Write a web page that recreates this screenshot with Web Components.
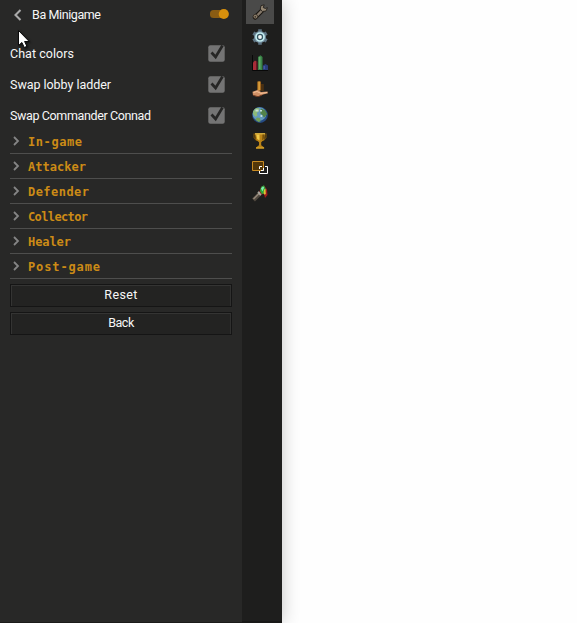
<!DOCTYPE html>
<html lang="en"><head><meta charset="utf-8"><title>Ba Minigame</title>
<style>html,body{margin:0;height:100%;overflow:hidden;background:#fefefe}</style></head><body>
<client-window></client-window>
<script>
const def=(name,html,setup)=>customElements.define(name,class extends HTMLElement{
  constructor(){super();this.attachShadow({mode:'open'});}
  connectedCallback(){this.shadowRoot.innerHTML=html;if(setup)setup(this,this.shadowRoot);}
});

// One line of text whose tracking is adjusted to fill the given width
def('fit-text',`<style>:host{display:block;white-space:nowrap;line-height:16px}span{display:inline-block}</style><span></span>`,(el,r)=>{
  const s=r.querySelector('span');s.textContent=el.getAttribute('text');
  const w=+el.getAttribute('width');
  const n=s.textContent.length;
  s.style.letterSpacing=((w-s.getBoundingClientRect().width)/(n-1))+'px';
});

def('panel-header',`<style>:host{display:flex;align-items:center;height:30px;padding:0 12px 0 13px}
fit-text{margin-left:9px;flex:1}svg{display:block}.t{margin-top:-2px}</style>
<svg width="10" height="14" viewBox="0 0 10 14"><path d="M7.5 2 2.5 7l5 5" fill="none" stroke="#a9a9a9" stroke-width="2.1"/></svg>
<fit-text text="Ba Minigame" width="69"></fit-text>
<svg class="t" width="20" height="12" viewBox="0 0 20 12"><rect x="0" y="2" width="16" height="8" rx="3.5" fill="#8a5c13"/><circle cx="13.8" cy="6" r="5.1" fill="#d8900c"/></svg>`);

def('check-row',`<style>:host{display:flex;align-items:center;justify-content:space-between;height:31px;padding:0 17px 0 10px}svg{display:block;margin-top:-1px}</style>
<fit-text></fit-text>
<svg width="17" height="17" viewBox="0 0 17 17"><rect x="0.3" y="0.3" width="16.4" height="16.4" rx="2" fill="#747474"/><path d="M3.5 7.5 7.6 12 14.5 .5" fill="none" stroke="#262625" stroke-width="2.7"/></svg>`,
(el,r)=>{const f=document.createElement('fit-text');f.setAttribute('text',el.getAttribute('label'));f.setAttribute('width',el.getAttribute('width'));r.querySelector('fit-text').replaceWith(f);});

def('section-row',`<style>:host{display:flex;align-items:center;height:24px;margin:0 10px;border-bottom:1px solid #4e4e4d;color:#cc8b16;font:bold 12px "DejaVu Sans Mono","Liberation Mono",monospace}
svg{margin:0 8px 0 2px;display:block}fit-text{margin-top:2px}</style>
<svg width="8" height="10" viewBox="0 0 8 10"><path d="M2 1l4 4-4 4" fill="none" stroke="#858585" stroke-width="1.8"/></svg><fit-text></fit-text>`,
(el,r)=>{const f=document.createElement('fit-text');f.style.marginTop='2px';f.setAttribute('text',el.getAttribute('label'));f.setAttribute('width',el.getAttribute('width'));r.querySelector('fit-text').replaceWith(f);});

def('panel-button',`<style>:host{display:flex;box-sizing:border-box;height:23px;margin:5px 10px 0;border:1px solid #151515;background:#232322;box-shadow:inset 1px 1px #343433,inset -1px 0 #30302f;justify-content:center;padding-top:2px}</style><fit-text></fit-text>`,
(el,r)=>{const f=document.createElement('fit-text');f.setAttribute('text',el.getAttribute('label'));f.setAttribute('width',el.getAttribute('width'));r.querySelector('fit-text').replaceWith(f);});

const icons={
wrench:`<path d="M3.2 13.4 10.5 6.2" stroke="#1a1712" stroke-width="4.6" stroke-linecap="round"/><path d="M3.6 13 10.8 5.8" stroke="#85786a" stroke-width="2.4"/><circle cx="3.4" cy="12.6" r="2.3" fill="#8b7d69" stroke="#221d17" stroke-width=".7"/><path d="M12.2 .8 9 1.7 8.3 5 10.2 7.4 14 7 15.4 3.7 13.4 4.5 11.2 3.6z" fill="#968975" stroke="#1c1814" stroke-width=".8"/><path d="M2.6 12.2h1.4v1.4H2.6z" fill="#29241e"/>`,
gear:`<g stroke="#5c7180" stroke-width="3.6"><path d="M8 .3v15.4M1.3 4.1l13.4 7.8M1.3 11.9 14.7 4.1"/></g><circle cx="8" cy="8" r="6" fill="#70899a"/><circle cx="8" cy="8" r="4" fill="#365462" stroke="#c4eef2" stroke-width="1.7"/><circle cx="8" cy="8" r="1.9" fill="#f0f6f5"/>`,
bars:`<path d="M.5 0v15.5H16" fill="none" stroke="#080808"/><path d="M1 7.5 3 5.5 5 7v8H1z" fill="#a82c38"/><path d="M4 7v8h1.5V6.5z" fill="#651a23"/><path d="M6 2 8.5.3 10.5 2v13H6z" fill="#398448"/><path d="M7 2h1.5v12H7z" fill="#65a568"/><path d="M11 10.5l2.4-1.6L16 10.6V15h-5z" fill="#293b7a"/><path d="M11.5 11h1.6v3h-1.6z" fill="#4458a1"/>`,
foot:`<path d="M5.2.5H9v9H5.2z" fill="#9b631d"/><path d="M6.2.5H8v9H6.2z" fill="#d79b3a"/><path d="M9 3h2.8v7H9z" fill="#493013"/><path d="M.5 10.8 4 9.5 6 8.7 9 11 15.5 10.5 16 12.2 11 13.5 6 15.8 1 14.4z" fill="#cf8f64"/><path d="M1.5 11.5 5 10.5 9 12.4l6-.9" fill="none" stroke="#f3c29a"/><path d="M1 14.3 6 15.7 10 14.2" fill="none" stroke="#6d3921"/>`,
globe:`<circle cx="8" cy="8" r="7.9" fill="#254a82"/><circle cx="7.4" cy="7" r="6.8" fill="#6399bd"/><path d="M1.2 4 4 1 7.5 1.2 6.7 4.5 4.8 6 5.5 8.5 3.4 9.8 1 7z" fill="#8db978"/><path d="M9 1.5 13 3.2 15.3 7 12 10.8 10.4 8 8.3 6.5z" fill="#52824a"/><path d="M5 10.5 8 11l.5 3.5-2 .6L3.3 12.7z" fill="#70a05c"/><path d="M3.5 2.5h3v2h-3M8 3h2v1.5H8M8.5 8h1.7v2H8.5" fill="#c6dfd8"/>`,
cup:`<path d="M2 1h12v3.5L11.5 7.5h-7L2 4.5z" fill="none" stroke="#79530a" stroke-width="1.1"/><path d="M3 .5h10l-.8 6L9.2 9.2v3l3 2.2v1.1H4v-1.1l3-2.2v-3L3.8 6.5z" fill="#ba8317"/><path d="M4.2 1.4h3.3v6.2L5.2 6z" fill="#f0ca4a"/><path d="M10.5 1h2l-.8 5-1.5 1.2z" fill="#765109"/><path d="M3 .8h10" stroke="#efc950"/><path d="M4 15h8" stroke="#e0ae31"/>`,
screens:`<path d="M.5 2.5h11v9H.5z" fill="#533709" stroke="#c98b22"/><path d="M13 7.5h2.5v7h-8V12M7.5 10V7.5H10M11.5 9v2.5H9" fill="none" stroke="#fff"/>`,
brush:`<path d="M1.5 15 8 8.5" stroke="#50483f" stroke-width="4"/><path d="M1.5 14 7.5 8" stroke="#95877a" stroke-width="1.5"/><path d="M6.2 6.8 9 10" stroke="#aaa79e" stroke-width="2.2"/><path d="M7.5 6.5 9 2 12 .5 15 4.5 15.5 10l-2.5 3-1-4-2.8.5z" fill="#a11b1f"/><path d="M8 6 9.2 1.8 12 .2l1.7 4L12 8.5 9.8 9z" fill="#28a43a"/><path d="M9 3.3 11 1.5l1.2 1-1.8 4z" fill="#83efb0"/><path d="M12 4.5 13.5 4l.3 5-1.3.8-.9-1.6z" fill="#ddc331"/>`};
def('tab-icon',`<style>:host{display:flex;width:28px;height:26px;align-items:center;justify-content:center}:host([selected]){background:#4a4a49;height:24px}svg{display:block}</style><svg width="16" height="16" viewBox="0 0 16 16" overflow="visible"></svg>`,
(el,r)=>{const s=r.querySelector('svg');s.innerHTML=icons[el.getAttribute('name')];});

def('side-bar',`<style>:host{display:flex;flex-direction:column;box-sizing:border-box;width:40px;height:100%;padding-left:4px;background:#1e1e1d;border-bottom:2px solid #181817;box-shadow:0 0 18px #0000003d}</style>
${Object.keys(icons).map((n,i)=>`<tab-icon name="${n}"${i?'':' selected'}></tab-icon>`).join('')}`);

def('mouse-cursor',`<style>:host{position:absolute;z-index:2;left:17px;top:29px;filter:drop-shadow(1px 1px 1px #0009)}svg{display:block}</style><svg width="14" height="21" viewBox="0 0 14 21"><path d="M1.5 1.5v15l3.4-3 2.4 5 2.6-1.2-2.3-4.8h4.6z" fill="#fff" stroke="#0b0b0b"/></svg>`);

def('client-window',`<style>:host{display:flex;height:623px;position:relative;color:#f7f7f7;font:12.5px Roboto,"Liberation Sans",sans-serif}
main{width:242px;background:#282827;box-sizing:border-box;border-bottom:1px solid #1b1b1a;position:relative;z-index:1}
.checks{padding-top:8px}.sections{margin-top:-2px}.actions{display:block}</style>
<main><panel-header></panel-header>
<div class="checks"><check-row label="Chat colors" width="64"></check-row><check-row label="Swap lobby ladder" width="101"></check-row><check-row label="Swap Commander Connad" width="141"></check-row></div>
<div class="sections"><section-row label="In-game" width="54"></section-row><section-row label="Attacker" width="58"></section-row><section-row label="Defender" width="61"></section-row><section-row label="Collector" width="60"></section-row><section-row label="Healer" width="43"></section-row><section-row label="Post-game" width="72"></section-row></div>
<div class="actions"><panel-button label="Reset" width="33"></panel-button><panel-button label="Back" width="26"></panel-button></div></main>
<side-bar></side-bar><mouse-cursor></mouse-cursor>`);
</script></body></html>
